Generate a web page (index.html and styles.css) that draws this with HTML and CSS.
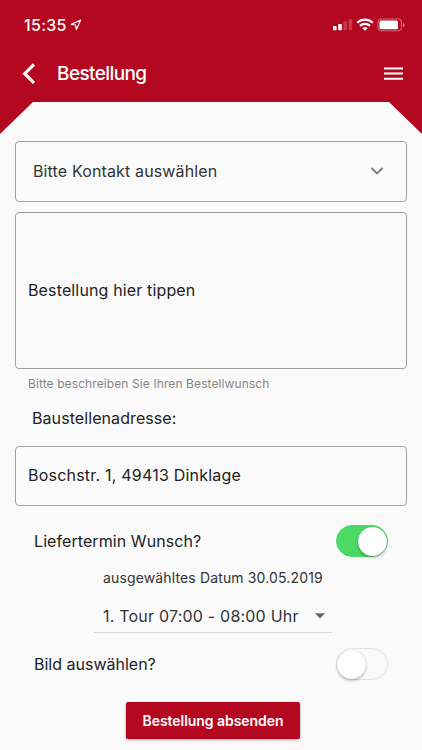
FILE: index.html
```html
<!DOCTYPE html>
<html lang="de">
<head>
<meta charset="utf-8">
<title>Bestellung</title>
<link rel="stylesheet" href="styles.css">
</head>
<body>
<header class="header">
  <div class="status">
    <span class="time">15:35</span>
    <svg class="location" width="12" height="12" viewBox="0 0 12 12"><path d="M10.7 1.1 1.2 5.3 5.6 6l.8 4.6z" fill="none" stroke="#fff" stroke-width="1.2" stroke-linejoin="round"/></svg>
    <svg class="signals" width="74" height="14" viewBox="0 0 74 14" fill="#fff">
      <rect x="1" y="8" width="3.6" height="4.2" rx=".8"/><rect x="6.2" y="6" width="3.6" height="6.2" rx=".8"/>
      <rect x="11.4" y="3.3" width="3.6" height="8.9" rx=".8" opacity=".2"/><rect x="16.6" y="1" width="3.6" height="11.2" rx=".8" opacity=".2"/>
      <g fill="none" stroke="#fff" stroke-width="2.2"><path d="M25.2 4.8a11.2 11.2 0 0 1 15.6 0"/><path d="M28 7.9a7.2 7.2 0 0 1 10 0"/></g>
      <path d="M30.4 10.2a3.9 3.9 0 0 1 5.2 0L33 12.8z"/>
      <rect x="46" y="1" width="23.4" height="11.8" rx="3" fill="none" stroke="#fff" stroke-opacity=".4"/>
      <rect x="47.5" y="2.5" width="18.5" height="8.8" rx="1.5"/>
      <path d="M71 5v4c1.3-.6 1.6-1.2 1.6-2S72.300 5.600 71 5z" opacity=".5"/>
    </svg>
  </div>
  <div class="bar">
    <svg class="back" width="14" height="22" viewBox="0 0 14 22"><path d="M13 1.500 3.700 10.700l9.300 9.200" fill="none" stroke="#fff" stroke-width="3.200"/></svg>
    <h1 class="title">Bestellung</h1>
    <svg class="menu" width="19" height="14" viewBox="0 0 19 14"><path d="M0 1.500h19M0 6.500h19M0 11.800h19" stroke="#fff" stroke-width="2"/></svg>
  </div>
</header>
<main class="form">
  <div class="field select"><span class="t-select">Bitte Kontakt auswählen</span>
    <svg width="14" height="10" viewBox="0 0 14 10"><path d="m1.500 2 5.500 5.400L12.500 2" fill="none" stroke="#7b7b7b" stroke-width="1.900"/></svg>
  </div>
  <div class="field message"><span class="t-message">Bestellung hier tippen</span></div>
  <p class="helper"><span class="t-helper">Bitte beschreiben Sie Ihren Bestellwunsch</span></p>
  <p class="label"><span class="t-label">Baustellenadresse:</span></p>
  <div class="field address"><span class="t-address">Boschstr. 1, 49413 Dinklage</span></div>
  <div class="row"><span class="t-date-q">Liefertermin Wunsch?</span><span class="switch on"></span></div>
  <p class="date"><span class="t-date">ausgewähltes Datum 30.05.2019</span></p>
  <div class="tour"><span class="t-tour">1. Tour 07:00 - 08:00 Uhr</span>
    <svg width="12" height="6" viewBox="0 0 12 6"><path d="M1 .3h10L6 5.500z" fill="#666"/></svg>
  </div>
  <div class="row image-row"><span class="t-image">Bild auswählen?</span><span class="switch"></span></div>
  <button class="submit"><span class="t-submit">Bestellung absenden</span></button>
</main>
</body>
</html>
```
FILE: styles.css
```css
* { box-sizing: border-box; }
body {
  margin: 0;
  height: 750px;
  overflow: hidden;
  background: #fafafa;
  color: #222;
  font: 16px/20px Inter, "Liberation Sans", sans-serif;
}
p, h1 { margin: 0; }
span { white-space: nowrap; }
svg { display: block; flex: none; }
.header {
  height: 134px;
  background: #b30820;
  color: #fff;
  clip-path: polygon(0 0, 100% 0, 100% 134px, 389px 102px, 33px 102px, 0 134px);
}
.status { display: flex; align-items: center; height: 50px; padding: 0 16px 0 24px; }
.time { font-weight: 500; font-size: 16px; letter-spacing: 0.3px; }
.location { margin-left: 3px; }
.signals { margin-left: auto; }
.bar { display: flex; align-items: center; height: 48px; padding: 0 19px 0 21px; }
.title { margin-left: 22px; font-size: 19px; font-weight: 500; line-height: 24px; letter-spacing: -0.6px; }
.menu { margin-left: auto; }
.form { display: flex; flex-direction: column; padding: 7px 15px 0; }
.field { display: flex; align-items: center; border: 1px solid #a0a0a0; border-radius: 4px; padding: 0 12px; }
.select { height: 61px; padding: 0 22px 1px 17px; justify-content: space-between; color: #333; }
.t-select, .t-message, .t-date { letter-spacing: 0.14px; }
.message { height: 157px; margin-top: 10px; padding-bottom: 2px; }
.helper { margin: 5px 0 0 13px; font-size: 12px; letter-spacing: 0.1px; color: #858585; }
.label { margin: 14px 0 0 17px; }
.t-label, .t-date-q { letter-spacing: 0.08px; }
.address { height: 60px; margin-top: 18px; padding-bottom: 2px; }
.t-address, .t-tour { letter-spacing: 0.21px; }
.row { display: flex; align-items: center; justify-content: space-between; height: 32px; margin: 19px 19px 0; }
.switch { width: 52px; height: 32px; padding: 1px; border: 1px solid #e2e2e6; border-radius: 16px; }
.switch::before { content: ""; display: block; width: 29px; height: 29px; border-radius: 50%; background: #fff; box-shadow: 0 2px 3px rgba(0, 0, 0, .22), 0 0 1px rgba(0, 0, 0, .25); }
.switch.on { border-color: #4cd964; background: #4cd964; }
.switch.on::before { margin-left: 20px; }
.switch:not(.on)::before { margin-left: -1px; }
.date { margin: 11px 0 0 88px; font-size: 14px; color: #333; }
.tour { display: flex; align-items: center; justify-content: space-between; width: 238px; height: 33px; margin: 12px 0 0 79px; padding: 0 6px 0 9px; border-bottom: 1px solid #d8d8d8; color: #333; }
.image-row { margin-top: 15px; }
.submit { align-self: center; width: 174px; height: 37px; margin: 22px 0 0 4px; padding: 0; border: 0; border-radius: 2px; background: #b30820; color: #fff; font: 600 14px/20px Inter, sans-serif; letter-spacing: -0.05px; box-shadow: 0 1px 3px rgba(0, 0, 0, .35); }
```
